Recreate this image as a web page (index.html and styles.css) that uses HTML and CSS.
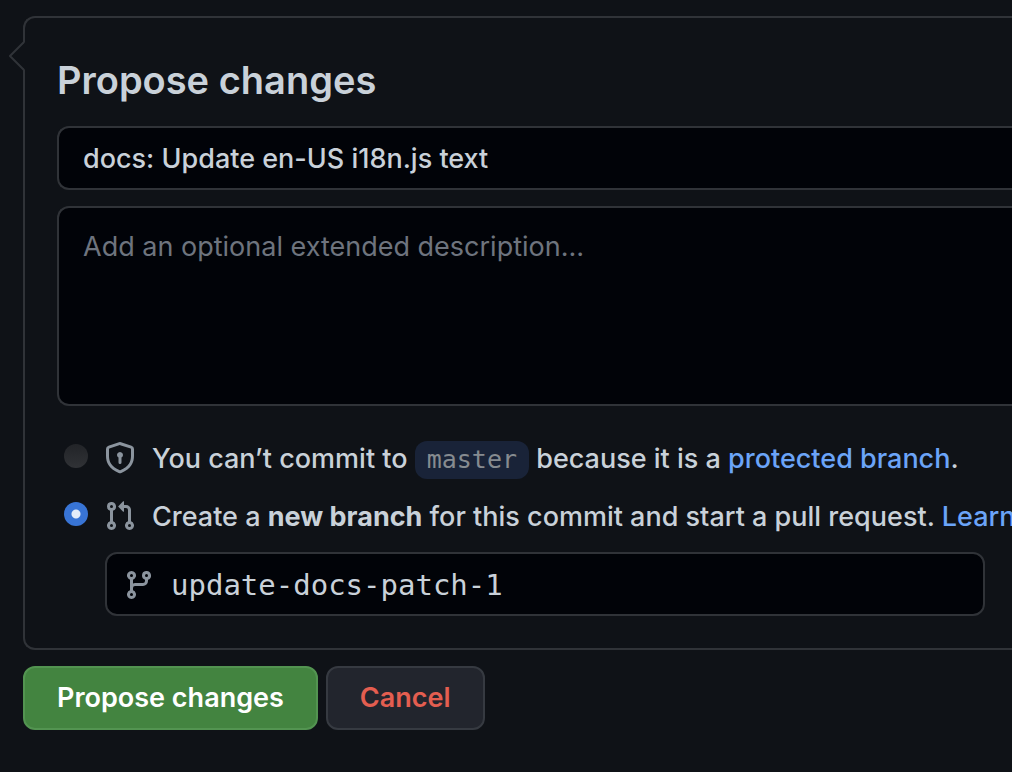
FILE: index.html
```html
<!DOCTYPE html>
<html lang="en">
<head>
<meta charset="utf-8">
<meta name="viewport" content="width=device-width, initial-scale=1">
<title>Propose changes</title>
<link rel="stylesheet" href="styles.css">
</head>
<body>
<form class="page">
  <section class="card">
    <svg class="card-notch" viewBox="0 0 16 30" aria-hidden="true"><path class="notch-fill" d="M16 1 L2 15 L16 29Z"/><path class="notch-line" d="M15 1 L1 15 L15 29"/></svg>
    <h2 class="card-title">Propose changes</h2>
    <input class="field" type="text" aria-label="Commit message" value="docs: Update en-US i18n.js text">
    <textarea class="field field-area" aria-label="Extended description" placeholder="Add an optional extended description…"></textarea>
    <div class="options">
      <div class="option">
        <input class="radio" type="radio" name="target" id="direct" disabled>
        <svg class="icon" viewBox="0 0 16 16" aria-hidden="true"><path d="M7.467.133a1.75 1.75 0 011.066 0l5.25 1.68A1.75 1.75 0 0115 3.48V7c0 1.566-.32 3.182-1.303 4.682-.983 1.498-2.585 2.813-5.032 3.855a1.7 1.7 0 01-1.33 0c-2.447-1.042-4.049-2.357-5.032-3.855C1.32 10.182 1 8.566 1 7V3.48a1.75 1.75 0 011.217-1.667l5.25-1.68zm.61 1.429a.25.25 0 00-.153 0l-5.25 1.68a.25.25 0 00-.174.238V7c0 1.358.275 2.666 1.057 3.86.784 1.194 2.121 2.34 4.366 3.297a.2.2 0 00.154 0c2.245-.956 3.582-2.104 4.366-3.298C13.225 9.666 13.5 8.36 13.5 7V3.48a.25.25 0 00-.174-.237l-5.25-1.68zM9.5 6.5a1.5 1.5 0 01-.75 1.3v2.45a.75.75 0 01-1.5 0V7.8A1.5 1.5 0 119.5 6.5z"/></svg>
        <label class="option-text" for="direct">You can’t commit to <code class="branch">master</code> because it is a <a class="link" href="#protected">protected branch</a>.</label>
      </div>
      <div class="option">
        <input class="radio" type="radio" name="target" id="branch" checked>
        <svg class="icon" viewBox="0 0 16 16" aria-hidden="true"><path d="M7.177 3.073L9.573.677A.25.25 0 0110 .854v4.792a.25.25 0 01-.427.177L7.177 3.427a.25.25 0 010-.354zM3.75 2.5a.75.75 0 100 1.5.75.75 0 000-1.5zm-2.25.75a2.25 2.25 0 113 2.122v5.256a2.251 2.251 0 11-1.5 0V5.372A2.25 2.25 0 011.5 3.25zM11 2.5h-1V4h1a1 1 0 011 1v5.628a2.251 2.251 0 101.5 0V5A2.5 2.5 0 0011 2.5zm1 10.25a.75.75 0 111.5 0 .75.75 0 01-1.5 0zM3.75 12a.75.75 0 100 1.5.75.75 0 000-1.5z"/></svg>
        <label class="option-text" for="branch">Create a <strong>new branch</strong> for this commit and start a pull request. <a class="link" href="#learn">Learn</a></label>
      </div>
    </div>
    <div class="branch-field">
      <svg class="icon" viewBox="0 0 16 16" aria-hidden="true"><path fill-rule="evenodd" d="M11.75 2.5a.75.75 0 100 1.5.75.75 0 000-1.5zm-2.25.75a2.25 2.25 0 113 2.122V6A2.5 2.5 0 0110 8.5H6a1 1 0 00-1 1v1.128a2.251 2.251 0 11-1.5 0V5.372a2.25 2.25 0 111.5 0v1.836A2.492 2.492 0 016 7h4a1 1 0 001-1v-.628A2.25 2.25 0 019.5 3.25zM4.25 12a.75.75 0 100 1.5.75.75 0 000-1.5zM3.5 3.25a.75.75 0 111.5 0 .75.75 0 01-1.5 0z"/></svg>
      <input class="branch-input" type="text" aria-label="New branch name" value="update-docs-patch-1">
    </div>
  </section>
  <div class="actions">
    <button class="button button-primary" type="submit">Propose changes</button>
    <button class="button button-danger" type="button">Cancel</button>
  </div>
</form>
</body>
</html>
```
FILE: styles.css
```css
* { box-sizing: border-box; }

body {
  margin: 0;
  background: #0f1217;
  color: #c9d1d9;
  font: 500 27px/42px Inter, "Liberation Sans", sans-serif;
}

.page {
  min-height: 100vh;
  padding: 16px 0 32px 23px;
  overflow: hidden;
}

.card {
  position: relative;
  padding: 32px 0 32px 32px;
  border: 2px solid #303338;
  border-right: 0;
  border-radius: 12px 0 0 12px;
}

.card-notch {
  position: absolute;
  top: 23px;
  left: -16px;
  width: 16px;
  height: 30px;
}
.notch-fill { fill: #0f1217; }
.notch-line { fill: none; stroke: #303338; stroke-width: 2; }

.card-title {
  margin: 0 0 16px;
  font-size: 38px;
  font-weight: 600;
  line-height: 60px;
}

.field {
  display: block;
  width: 100%;
  height: 64px;
  padding: 0 24px;
  border: 2px solid #303338;
  border-right: 0;
  border-radius: 12px 0 0 12px;
  outline: 0;
  background: #010308;
  color: inherit;
  font: inherit;
}
.field-area {
  height: 200px;
  margin-top: 16px;
  padding-top: 18px;
  font-weight: 400;
  resize: none;
}
.field::placeholder { color: #6e747e; opacity: 1; }

.options {
  display: grid;
  gap: 14px;
  margin: 30px 0 14px;
  padding-left: 7px;
}
.option {
  display: flex;
  align-items: center;
  gap: 16px;
  white-space: nowrap;
}
.option-text { padding-top: 2px; }

.radio {
  flex: none;
  appearance: none;
  width: 24px;
  height: 24px;
  margin: 0 0 4px;
  border-radius: 50%;
  background: linear-gradient(#222428, #303236);
}
.radio:checked {
  background: radial-gradient(circle, #e4ecf9 4px, #3874d5 5px);
}

.icon {
  flex: none;
  width: 32px;
  height: 32px;
  fill: #8b949e;
}

.branch {
  display: inline-block;
  padding: 0 12px;
  border-radius: 12px;
  background: #192338;
  color: #868b90;
  font: 25px/38px "DejaVu Sans Mono", monospace;
}
.link { color: #6ba4f8; text-decoration: none; }

.branch-field {
  display: flex;
  align-items: center;
  gap: 16px;
  height: 64px;
  margin: 0 27px 0 48px;
  padding: 2px 16px 0;
  border: 2px solid #303338;
  border-radius: 12px;
  background: #010308;
}
.branch-input {
  flex: 1;
  min-width: 0;
  padding: 0;
  border: 0;
  outline: 0;
  background: none;
  color: inherit;
  font: 29px/42px "DejaVu Sans Mono", monospace;
}

.actions {
  display: flex;
  gap: 8px;
  margin-top: 16px;
}
.button {
  height: 64px;
  padding: 0 32px;
  border: 2px solid #363a41;
  border-radius: 12px;
  background: #22252d;
  font: inherit;
  font-weight: 600;
}
.button-primary {
  border-color: #539451;
  background: #438440;
  color: #fff;
}
.button-danger { color: #e45e50; }
```
